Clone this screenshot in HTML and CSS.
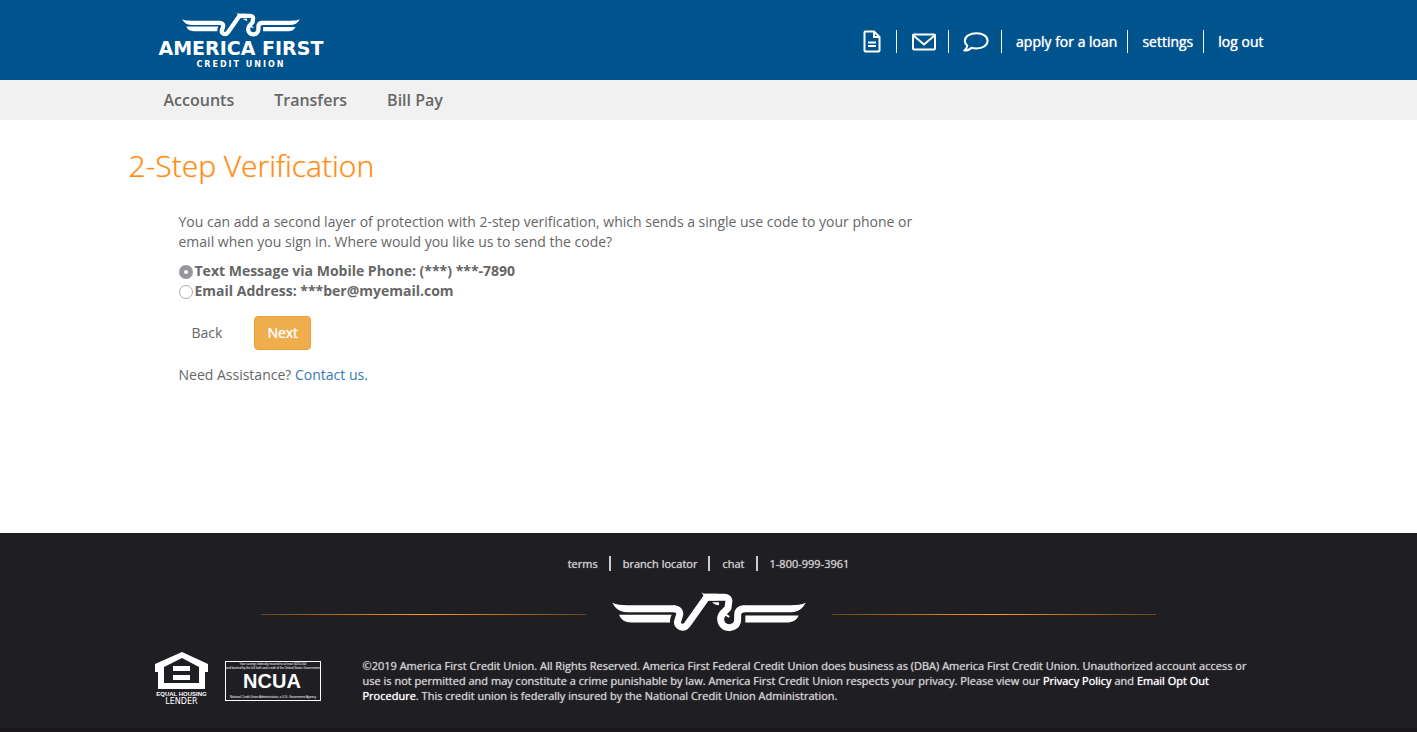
FILE: index.html
```html
<!DOCTYPE html>
<html lang="en">
<head>
<meta charset="utf-8">
<meta name="viewport" content="width=device-width, initial-scale=1">
<title>2-Step Verification</title>
<link rel="stylesheet" href="styles.css">
</head>
<body>
<svg class="defs" aria-hidden="true">
  <symbol id="eagle" viewBox="34 18 582 122">
    <path fill="currentColor" d="M35 53C48 59 62 60 80 60H222V81H78C58 81 45 72 35 53ZM55 89H213C209 97 208 104 208 112H92C72 112 61 104 55 89ZM615 53C602 59 588 60 570 60H428V81H572C592 81 605 72 615 53ZM594 91H434V112H557C577 112 588 105 594 91ZM301 19C305 25 311 26 322 26H350V46H322L311 42C311 34 307 28 301 19ZM334 51H355V60C347 60 340 57 334 51Z"/>
    <path fill="none" stroke="currentColor" stroke-width="21" stroke-linejoin="round" d="M218 70.500C234 70 240 81 236 92L231 108C227 124 248 134 260 118L318 36H370C382 36 386 42 384 54L382 68C378 78 361 80 360 100C359 136 411 136 411 103V89C411 77 418 70.500 432 70.500"/>
    <path fill="none" stroke="currentColor" stroke-width="6" d="M372 76L374 88L386 95"/>
  </symbol>
</svg>
<header class="masthead">
  <div class="container masthead-row">
    <a class="brand" href="#" aria-label="America First Credit Union">
      <svg class="brand-eagle"><use href="#eagle"/></svg>
      <span class="brand-name">AMERICA FIRST</span>
      <span class="brand-sub">CREDIT UNION</span>
    </a>
    <nav class="tools" aria-label="Account tools">
      <a class="tool-doc" href="#" aria-label="Documents"><svg width="18" height="23" viewBox="0 0 18 23" fill="none" stroke="currentColor" stroke-width="2"><path d="M2.500 1.500H11L16.500 7V20.500Q16.500 21.500 15.500 21.500H2.500Q1.500 21.500 1.500 20.500V2.500Q1.500 1.500 2.500 1.500ZM11 1.500V7H16.500M5 12.500H13M5 16H13"/></svg></a>
      <a class="tool-mail" href="#" aria-label="Messages"><svg width="26" height="18" viewBox="0 0 26 18" fill="none" stroke="currentColor" stroke-width="2"><rect x="2" y="1.500" width="22" height="15" rx="1"/><path d="M3 3L13 11.500L23 3"/></svg></a>
      <a class="tool-chat" href="#" aria-label="Chat"><svg width="26" height="20" viewBox="0 0 26 20" fill="none" stroke="currentColor" stroke-width="2" stroke-linejoin="round"><path d="M13.500 1.200C20 1.200 24.600 4.500 24.600 8.800S20 16.400 13.500 16.400C11.700 16.400 10 16.200 8.500 15.700C6.500 17.600 4.200 18.600 1.300 18.600C3 17.300 4 15.600 4.300 13.600C2.700 12.300 1.800 10.700 1.800 8.800C1.800 4.500 7 1.200 13.500 1.200Z"/></svg></a>
      <a href="#">apply for a loan</a>
      <a href="#">settings</a>
      <a href="#">log out</a>
    </nav>
  </div>
</header>
<nav class="mainnav" aria-label="Main">
  <div class="container mainnav-row">
    <a href="#">Accounts</a>
    <a href="#">Transfers</a>
    <a href="#">Bill Pay</a>
  </div>
</nav>
<main class="container page">
  <h1>2-Step Verification</h1>
  <form class="verify">
    <p>You can add a second layer of protection with 2-step verification, which sends a single use code to your phone or email when you sign in. Where would you like us to send the code?</p>
    <div class="options">
      <label><input type="radio" name="method" checked>Text Message via Mobile Phone: (***) ***-7890</label>
      <label><input type="radio" name="method">Email Address: ***ber@myemail.com</label>
    </div>
    <div class="actions">
      <button class="btn" type="button">Back</button>
      <button class="btn btn-primary" type="button">Next</button>
    </div>
    <p>Need Assistance? <a href="#">Contact us.</a></p>
  </form>
</main>
<footer class="footer">
  <div class="container">
    <nav class="footer-links" aria-label="Footer">
      <a href="#">terms</a>
      <a href="#">branch locator</a>
      <a href="#">chat</a>
      <a href="#">1-800-999-3961</a>
    </nav>
    <div class="divider">
      <span class="rule"></span>
      <svg class="divider-eagle" role="img" aria-label="America First"><use href="#eagle"/></svg>
      <span class="rule"></span>
    </div>
    <div class="legal">
      <div class="lender">
        <svg width="54" height="37" viewBox="0 0 54 37" fill="currentColor"><path fill-rule="evenodd" d="M27 0L53 12V20H50V37H3V20H0V12ZM27 6L9 15V31H44V15Z"/><path d="M18 14H35V19H18ZM18 23H35V28H18Z"/></svg>
        <span class="lender-top">EQUAL HOUSING</span>
        <span class="lender-bottom">LENDER</span>
      </div>
      <svg class="ncua" width="96" height="40" viewBox="0 0 96 40">
        <rect x="0.500" y="0.500" width="95" height="39" fill="none" stroke="currentColor"/>
        <g fill="currentColor" text-anchor="middle">
          <text class="micro" x="48" y="4">Your savings federally insured to at least $250,000</text>
          <text class="micro" x="48" y="8">and backed by the full faith and credit of the United States Government</text>
          <text class="ncua-name" x="47" y="27">NCUA</text>
          <text class="micro" x="48" y="37">National Credit Union Administration, a U.S. Government Agency</text>
        </g>
      </svg>
      <p>©2019 America First Credit Union. All Rights Reserved. America First Federal Credit Union does business as (DBA) America First Credit Union. Unauthorized account access or use is not permitted and may constitute a crime punishable by law. America First Credit Union respects your privacy. Please view our <a href="#">Privacy Policy</a> and <a href="#">Email Opt Out Procedure</a>. This credit union is federally insured by the National Credit Union Administration.</p>
    </div>
  </div>
</footer>
</body>
</html>
```
FILE: styles.css
```css
* {
  box-sizing: border-box;
}

body {
  margin: 0;
  min-height: 100vh;
  display: flex;
  flex-direction: column;
  background: #fff;
  color: #666;
  font: 14px/20px "Open Sans", "Noto Sans", sans-serif;
}

a {
  color: #337ab7;
  text-decoration: none;
}

svg {
  display: block;
}

.defs {
  display: none;
}

.container {
  width: 100%;
  max-width: 1160px;
  margin: 0 auto;
}

.masthead {
  background: #00548e;
  color: #fff;
}

.masthead-row {
  display: flex;
  justify-content: space-between;
  align-items: flex-start;
  min-height: 80px;
  padding: 12px 25px 0 30px;
}

.brand {
  display: flex;
  flex-direction: column;
  align-items: center;
  color: #fff;
}

.brand-eagle {
  width: 118px;
  height: 25px;
}

.brand-name {
  font: bold 19px/23px "DejaVu Sans", sans-serif;
}

.brand-sub {
  font: bold 8px/10px "DejaVu Sans", sans-serif;
  letter-spacing: 2px;
}

.tools {
  display: flex;
  align-items: center;
  padding-top: 18px;
}

.tools a {
  display: flex;
  align-items: center;
  height: 23px;
  margin-right: 10px;
  color: #fff;
  text-shadow: 0 0 1px #fff;
}

.tools a + a {
  padding-left: 14px;
  border-left: 1px solid #fff;
}

.tools a:last-child {
  margin-right: 0;
}

.tools .tool-doc {
  margin-right: 15px;
}

.tools .tool-mail {
  margin-right: 11px;
}

.tools .tool-chat {
  margin-right: 12px;
}

.mainnav {
  background: #f1f1f1;
}

.mainnav-row {
  display: flex;
  gap: 40px;
  padding: 10px 35px;
}

.mainnav a {
  color: #666;
  font-size: 16px;
  font-weight: 600;
}

.page {
  flex: 1;
  padding: 26px 0 32px;
}

h1 {
  margin: 0;
  color: #ff8c1a;
  font-size: 30px;
  font-weight: 300;
  line-height: 40px;
  text-shadow: 0 0 1px #ffb066;
}

.verify {
  max-width: 850px;
  padding: 26px 50px 0;
}

.verify p {
  margin: 0;
}

.options {
  display: flex;
  flex-direction: column;
  align-items: flex-start;
  padding: 9px 0 15px;
}

.options label {
  display: flex;
  align-items: center;
  gap: 2px;
  font-weight: 700;
}

.options input {
  appearance: none;
  width: 14px;
  height: 14px;
  margin: 2px 0 0;
  border: 1px solid #aaa;
  border-radius: 50%;
  background: #fff;
}

.options input:checked {
  border: 5px solid #97979c;
}

.actions {
  display: flex;
  gap: 19px;
  padding-bottom: 15px;
}

.btn {
  padding: 6px 12px;
  border: 1px solid transparent;
  border-radius: 4px;
  background: none;
  color: #666;
  font: inherit;
}

.btn-primary {
  border-color: #eea236;
  background: #f0ad4e;
  color: #fff;
  text-shadow: 0 0 1px #fff;
}

.footer {
  padding: 23px 0;
  border-bottom: 4px solid #1a171b;
  background: #1f1e23;
  color: #ccc;
  font-size: 11px;
  line-height: 15px;
}

.footer-links {
  display: flex;
  justify-content: center;
}

.footer-links a {
  color: #ccc;
  text-shadow: 0 0 1px #ccc;
}

.footer-links a + a {
  margin-left: 11px;
  padding-left: 12px;
  border-left: 2px solid #ccc;
}

.divider {
  display: flex;
  justify-content: center;
  align-items: center;
  gap: 26px;
  padding: 20px 0;
}

.divider-eagle {
  width: 194px;
  height: 41px;
  color: #fff;
}

.rule {
  width: 28%;
  height: 1px;
  margin-top: 6px;
  background: linear-gradient(90deg, #6b431a, #ff9a1f, #6b431a);
}

.legal {
  display: flex;
  align-items: flex-start;
  padding: 0 38px 0 26px;
}

.legal > * {
  flex-shrink: 0;
}

.legal p {
  flex: 1;
  margin: 6px 0 0 42px;
  text-shadow: 0 0 1px #ccc;
}

.legal a {
  color: #fff;
  text-shadow: 0 0 1px #fff;
}

.lender {
  display: flex;
  flex-direction: column;
  align-items: center;
  color: #fff;
}

.lender-top {
  margin-top: 2px;
  font: bold 6px/7px "Liberation Sans", sans-serif;
}

.lender-bottom {
  font: 8px/7px "DejaVu Sans", sans-serif;
}

.ncua {
  margin: 9px 0 0 16px;
  color: #fff;
}

.ncua-name {
  font: bold 20px "Liberation Sans", sans-serif;
}

.micro {
  font: 3px "Liberation Sans", sans-serif;
}
```
